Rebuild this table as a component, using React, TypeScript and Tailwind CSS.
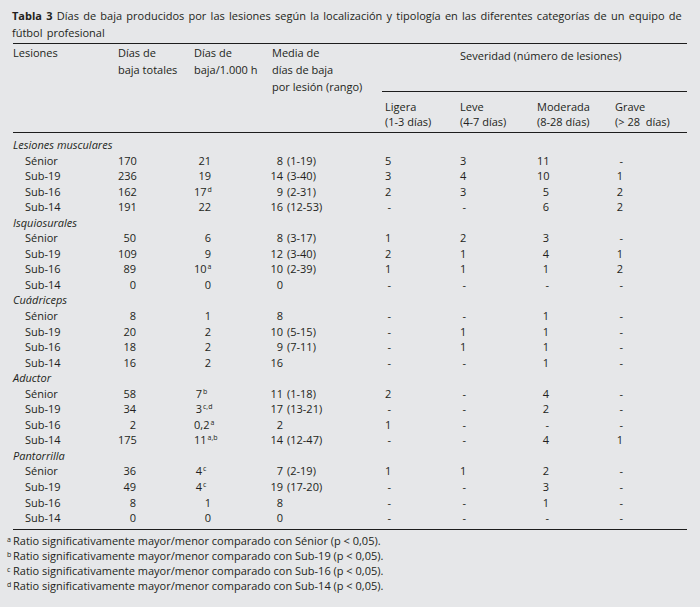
type Row = {
  name: string;
  total: string;
  rate: string;
  rateSup?: string;
  mean: string;
  range?: string;
  sev: [string, string, string, string];
};

type Group = { title: string; rows: Row[] };

const groups: Group[] = [
  {
    title: "Lesiones musculares",
    rows: [
      { name: "Sénior", total: "170", rate: "21", mean: "8", range: "(1-19)", sev: ["5", "3", "11", "-"] },
      { name: "Sub-19", total: "236", rate: "19", mean: "14", range: "(3-40)", sev: ["3", "4", "10", "1"] },
      { name: "Sub-16", total: "162", rate: "17", rateSup: "d", mean: "9", range: "(2-31)", sev: ["2", "3", "5", "2"] },
      { name: "Sub-14", total: "191", rate: "22", mean: "16", range: "(12-53)", sev: ["-", "-", "6", "2"] },
    ],
  },
  {
    title: "Isquiosurales",
    rows: [
      { name: "Sénior", total: "50", rate: "6", mean: "8", range: "(3-17)", sev: ["1", "2", "3", "-"] },
      { name: "Sub-19", total: "109", rate: "9", mean: "12", range: "(3-40)", sev: ["2", "1", "4", "1"] },
      { name: "Sub-16", total: "89", rate: "10", rateSup: "a", mean: "10", range: "(2-39)", sev: ["1", "1", "1", "2"] },
      { name: "Sub-14", total: "0", rate: "0", mean: "0", sev: ["-", "-", "-", "-"] },
    ],
  },
  {
    title: "Cuádriceps",
    rows: [
      { name: "Sénior", total: "8", rate: "1", mean: "8", sev: ["-", "-", "1", "-"] },
      { name: "Sub-19", total: "20", rate: "2", mean: "10", range: "(5-15)", sev: ["-", "1", "1", "-"] },
      { name: "Sub-16", total: "18", rate: "2", mean: "9", range: "(7-11)", sev: ["-", "1", "1", "-"] },
      { name: "Sub-14", total: "16", rate: "2", mean: "16", sev: ["-", "-", "1", "-"] },
    ],
  },
  {
    title: "Aductor",
    rows: [
      { name: "Sénior", total: "58", rate: "7", rateSup: "b", mean: "11", range: "(1-18)", sev: ["2", "-", "4", "-"] },
      { name: "Sub-19", total: "34", rate: "3", rateSup: "c,d", mean: "17", range: "(13-21)", sev: ["-", "-", "2", "-"] },
      { name: "Sub-16", total: "2", rate: "0,2", rateSup: "a", mean: "2", sev: ["1", "-", "-", "-"] },
      { name: "Sub-14", total: "175", rate: "11", rateSup: "a,b", mean: "14", range: "(12-47)", sev: ["-", "-", "4", "1"] },
    ],
  },
  {
    title: "Pantorrilla",
    rows: [
      { name: "Sénior", total: "36", rate: "4", rateSup: "c", mean: "7", range: "(2-19)", sev: ["1", "1", "2", "-"] },
      { name: "Sub-19", total: "49", rate: "4", rateSup: "c", mean: "19", range: "(17-20)", sev: ["-", "-", "3", "-"] },
      { name: "Sub-16", total: "8", rate: "1", mean: "8", sev: ["-", "-", "1", "-"] },
      { name: "Sub-14", total: "0", rate: "0", mean: "0", sev: ["-", "-", "-", "-"] },
    ],
  },
];

const notes = [
  { mark: "a", text: "Ratio significativamente mayor/menor comparado con Sénior (p < 0,05)." },
  { mark: "b", text: "Ratio significativamente mayor/menor comparado con Sub-19 (p < 0,05)." },
  { mark: "c", text: "Ratio significativamente mayor/menor comparado con Sub-16 (p < 0,05)." },
  { mark: "d", text: "Ratio significativamente mayor/menor comparado con Sub-14 (p < 0,05)." },
];

const grid = "grid grid-cols-[105px_76px_72px_119px_75px_77px_78px_72px]";

function BodyRow({ row }: { row: Row }) {
  return (
    <div className={grid}>
      <div className="pl-[12px]">{row.name}</div>
      <div className="pr-[58px] text-right">{row.total}</div>
      <div className="pr-[55px] text-right whitespace-nowrap">
        {row.rate}
        {row.rateSup && (
          <span className="inline-block w-0 text-left text-[7px] leading-none align-[4px]">
            <span className="pl-[1px]">{row.rateSup}</span>
          </span>
        )}
        {row.rateSup && <span className="inline-block w-[9px]" />}
      </div>
      <div className="flex whitespace-nowrap">
        <span className="inline-block w-[17px] text-right">{row.mean}</span>
        {row.range && <span className="ml-[4px]">{row.range}</span>}
      </div>
      <div className="flex">
        <span className="inline-block w-[6px] text-right">{row.sev[0]}</span>
      </div>
      <div className="flex">
        <span className="inline-block w-[6px] text-right">{row.sev[1]}</span>
      </div>
      <div className="flex">
        <span className="inline-block w-[12px] text-right">{row.sev[2]}</span>
      </div>
      <div className="flex pl-[1px]">
        <span className="inline-block w-[7px] text-right">{row.sev[3]}</span>
      </div>
    </div>
  );
}

export default function App() {
  return (
    <div className="w-[700px] h-[607px] bg-[#e6e7e9] text-[#231f20] font-['Open_Sans',sans-serif] text-[11px] px-[13px] overflow-hidden">
      <div className="pt-[7px] mb-[2px] leading-[17px] ml-[-1px] [word-spacing:1.4px]">
        <div className="whitespace-nowrap">
          <span className="font-bold">Tabla 3</span> Días de baja producidos por las lesiones según la
          localización y tipología en las diferentes categorías de un equipo de
        </div>
        <div className="whitespace-nowrap">fútbol profesional</div>
      </div>

      <div className="flex border-t border-b border-[#1d1d1d] leading-[17px]">
        <div className="w-[105px]">Lesiones</div>
        <div className="w-[76px] whitespace-nowrap">
          Días de
          <br />
          baja totales
        </div>
        <div className="w-[72px] whitespace-nowrap">
          Días de
          <br />
          baja/1.000 h
        </div>
        <div className="w-[116px] pl-[6px] whitespace-nowrap">
          Media de
          <br />
          días de baja
          <br />
          por lesión (rango)
        </div>
        <div className="w-[305px] flex flex-col">
          <div className="h-[48px] pt-[3px] pl-[78px] border-b border-[#1d1d1d]">
            Severidad (número de lesiones)
          </div>
          <div className="grid grid-cols-[75px_77px_78px_72px] pl-[3px] pt-[7px] pb-[3px] leading-[15px] whitespace-nowrap">
            <div>
              Ligera
              <br />
              (1-3 días)
            </div>
            <div>
              Leve
              <br />
              (4-7 días)
            </div>
            <div>
              Moderada
              <br />
              (8-28 días)
            </div>
            <div>
              Grave
              <br />
              (&gt; 28&nbsp; días)
            </div>
          </div>
        </div>
      </div>

      <div className="pt-[4px] pb-[3px] leading-[15.55px] border-b border-[#1d1d1d]">
        {groups.map((g) => (
          <div key={g.title}>
            <div className="italic">{g.title}</div>
            {g.rows.map((r, i) => (
              <BodyRow key={i} row={r} />
            ))}
          </div>
        ))}
      </div>

      <div className="pt-[3px] leading-[15px]">
        {notes.map((n) => (
          <div key={n.mark} className="whitespace-nowrap">
            <span className="inline-block w-[6px] ml-[-6px] text-[7px] leading-none align-[3px]">{n.mark}</span>
            {n.text}
          </div>
        ))}
      </div>
    </div>
  );
}
